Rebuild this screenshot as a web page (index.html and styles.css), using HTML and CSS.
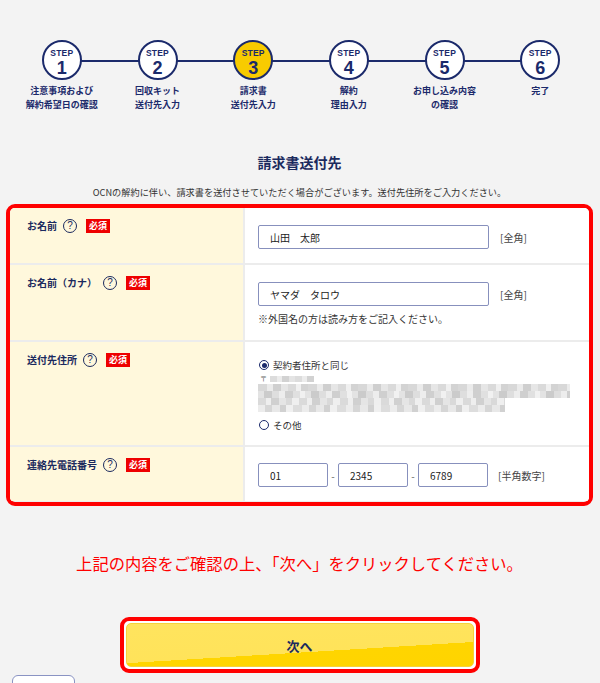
FILE: index.html
```html
<!DOCTYPE html>
<html lang="ja">
<head>
<meta charset="utf-8">
<title>請求書送付先</title>
<link rel="stylesheet" href="styles.css">
</head>
<body>
<div class="page">
  <ol class="steps">
    <li class="step"><span class="circle"><span class="step-word">STEP</span><span class="step-num">1</span></span><span class="step-label">注意事項および<br>解約希望日の確認</span></li>
    <li class="step"><span class="circle"><span class="step-word">STEP</span><span class="step-num">2</span></span><span class="step-label">回収キット<br>送付先入力</span></li>
    <li class="step"><span class="circle current"><span class="step-word">STEP</span><span class="step-num">3</span></span><span class="step-label">請求書<br>送付先入力</span></li>
    <li class="step"><span class="circle"><span class="step-word">STEP</span><span class="step-num">4</span></span><span class="step-label">解約<br>理由入力</span></li>
    <li class="step"><span class="circle"><span class="step-word">STEP</span><span class="step-num">5</span></span><span class="step-label">お申し込み内容<br>の確認</span></li>
    <li class="step"><span class="circle"><span class="step-word">STEP</span><span class="step-num">6</span></span><span class="step-label">完了</span></li>
  </ol>

  <h1 class="title">請求書送付先</h1>
  <p class="lead">OCNの解約に伴い、請求書を送付させていただく場合がございます。送付先住所をご入力ください。</p>

  <div class="form-box">
    <div class="form-table">
      <div class="label-cell">
        <div class="label-line"><span class="label">お名前</span><span class="help">?</span><span class="req">必須</span></div>
      </div>
      <div class="value-cell">
        <div class="field"><input class="text-input" type="text" value="山田　太郎"><span class="hint">[全角]</span></div>
      </div>

      <div class="label-cell">
        <div class="label-line"><span class="label">お名前（カナ）</span><span class="help">?</span><span class="req">必須</span></div>
      </div>
      <div class="value-cell">
        <div class="field"><input class="text-input" type="text" value="ヤマダ　タロウ"><span class="hint">[全角]</span></div>
        <p class="note">※外国名の方は読み方をご記入ください。</p>
      </div>

      <div class="label-cell">
        <div class="label-line"><span class="label">送付先住所</span><span class="help">?</span><span class="req">必須</span></div>
      </div>
      <div class="value-cell">
        <div class="radio-line"><span class="radio checked"></span><span class="radio-text">契約者住所と同じ</span></div>
        <div class="zip"><span class="zip-mark">〒</span><span class="zip-blur"></span></div>
        <div class="mosaic">
          <div class="mz mz1"></div>
          <div class="mz mz2"></div>
          <div class="mz mz3"></div>
          <div class="mz mz4"></div>
        </div>
        <div class="radio-line other"><span class="radio"></span><span class="radio-text">その他</span></div>
      </div>

      <div class="label-cell">
        <div class="label-line"><span class="label">連絡先電話番号</span><span class="help">?</span><span class="req">必須</span></div>
      </div>
      <div class="value-cell phone-cell">
        <div class="field">
          <input class="tel-input" type="text" value="01"><span class="dash">-</span><input class="tel-input" type="text" value="2345"><span class="dash">-</span><input class="tel-input" type="text" value="6789"><span class="hint tel-hint">[半角数字]</span>
        </div>
      </div>
    </div>
  </div>

  <p class="confirm">上記の内容をご確認の上、「次へ」をクリックしてください。</p>

  <div class="next-wrap"><button class="next-btn" type="button">次へ</button></div>
  <button class="back-btn" type="button" aria-label="戻る"></button>
</div>
</body>
</html>
```

FILE: styles.css
```css
* { box-sizing: border-box; }
html, body { margin: 0; padding: 0; }
body {
  background: #f3f3f3;
  font-family: "Noto Sans CJK JP", "Noto Sans", sans-serif;
  color: #333;
  width: 600px;
  height: 683px;
  overflow: hidden;
}
.page { padding: 40px 7px 0 6px; }

/* steps */
.steps {
  list-style: none;
  margin: 0 5px 0 8px;
  padding: 0;
  display: flex;
}
.step {
  flex: 1 1 0;
  position: relative;
  display: flex;
  flex-direction: column;
  align-items: center;
}
.step + .step::before {
  content: "";
  position: absolute;
  top: 20px;
  left: -50%;
  width: 100%;
  height: 2px;
  background: #1b2a6b;
}
.circle {
  position: relative;
  z-index: 1;
  width: 40px;
  height: 40px;
  border: 2px solid #1b2a6b;
  border-radius: 50%;
  background: #fff;
  display: flex;
  flex-direction: column;
  align-items: center;
  justify-content: center;
  padding-top: 5px;
  color: #1b2a6b;
  font-family: "Liberation Sans", Arial, sans-serif;
  font-weight: 700;
}
.circle.current { background: #f8cb00; }
.step-word { display: block; font-size: 8.5px; line-height: 10px; letter-spacing: 0.2px; }
.step-num { display: block; font-size: 18px; line-height: 20px; }
.step-label {
  margin-top: 4px;
  font-size: 9px;
  line-height: 13.5px;
  font-weight: 700;
  color: #1b2a6b;
  text-align: center;
  white-space: nowrap;
}

/* heading */
.title {
  margin: 41px 0 0;
  font-size: 14px;
  line-height: 20px;
  font-weight: 700;
  color: #1b2a5e;
  text-align: center;
}
.lead {
  margin: 13px 0 0;
  font-size: 9.2px;
  line-height: 14px;
  text-align: center;
  color: #333;
}

/* form */
.form-box {
  margin-top: 5px;
  border: 4px solid #f00;
  border-radius: 9px;
  overflow: hidden;
  background: #ececec;
  padding-bottom: 1px;
}
.form-table {
  display: grid;
  grid-template-columns: 233px 1fr;
  gap: 2px;
  background: #ececec;
}
.label-cell {
  background: #fff8dc;
  padding: 11px 10px 11px 17px;
}
.label-line { display: flex; align-items: center; }
.label {
  font-size: 10px;
  line-height: 14px;
  font-weight: 700;
  color: #1b2a5e;
}
.help {
  margin-left: 6px;
  width: 14px;
  height: 14px;
  border: 1.5px solid #1b2a5e;
  border-radius: 50%;
  display: flex;
  align-items: center;
  justify-content: center;
  font-family: "Liberation Sans", sans-serif;
  font-size: 10px;
  line-height: 10px;
  color: #1b2a5e;
}
.req {
  margin-left: 9px;
  width: 24px;
  height: 14px;
  background: #ee0000;
  color: #fff;
  font-size: 9px;
  line-height: 14px;
  font-weight: 700;
  text-align: center;
}
.value-cell {
  background: #fff;
  padding: 17px 13px 14px;
}
.phone-cell { padding-top: 16px; }
.field { display: flex; align-items: center; }
.text-input,
.tel-input {
  height: 24px;
  border: 1px solid #8790bd;
  border-radius: 2px;
  background: #fff;
  padding: 0 11px;
  font-family: "Noto Sans CJK JP", sans-serif;
  font-size: 10px;
  color: #222;
  outline: none;
}
.text-input { width: 231px; }
.tel-input { width: 70px; }
.dash {
  width: 10px;
  text-align: center;
  font-size: 10px;
  color: #666;
}
.hint {
  margin-left: 11px;
  font-size: 10px;
  color: #444;
}
.tel-hint { margin-left: 10px; }
.note {
  margin: 6px 0 0;
  font-size: 10px;
  line-height: 14px;
  color: #333;
}

/* radio + address */
.radio-line {
  display: flex;
  align-items: center;
  height: 12px;
  margin-left: 1px;
}
.radio {
  width: 10px;
  height: 10px;
  border: 1.5px solid #1b2a6b;
  border-radius: 50%;
  background: #fff;
  display: flex;
  align-items: center;
  justify-content: center;
}
.radio.checked::after {
  content: "";
  width: 5px;
  height: 5px;
  border-radius: 50%;
  background: #1b2a6b;
}
.radio-text {
  margin-left: 4px;
  font-size: 9.5px;
  color: #333;
}
.zip {
  display: flex;
  align-items: center;
  height: 9px;
  margin-top: 3px;
  margin-left: 2px;
}
.zip-mark { font-size: 7px; line-height: 7px; color: #666; }
.zip-blur {
  margin-left: 3px;
  width: 44px;
  height: 6px;
  background: repeating-linear-gradient(90deg, #dcdcdc 0 7px, #ececec 7px 12px, #d2d2d2 12px 19px, #e4e4e4 19px 25px);
}
.mosaic { margin-top: 1px; }
.mz { height: 7px; }
.mz1 {
  width: 312px;
  background: repeating-linear-gradient(90deg, #d8d8d8 0 9px, #ebebeb 9px 15px, #cfcfcf 15px 23px, #e6e6e6 23px 30px, #dadada 30px 38px, #f0f0f0 38px 43px, #d3d3d3 43px 50px);
}
.mz2 {
  width: 312px;
  background: repeating-linear-gradient(90deg, #e3e3e3 0 6px, #cbcbcb 6px 14px, #dedede 14px 21px, #ededed 21px 27px, #cfcfcf 27px 35px, #e0e0e0 35px 42px, #f1f1f1 42px 47px);
}
.mz3 {
  width: 247px;
  background: repeating-linear-gradient(90deg, #dadada 0 8px, #eeeeee 8px 13px, #d0d0d0 13px 21px, #e5e5e5 21px 28px, #d9d9d9 28px 34px, #efefef 34px 41px);
}
.mz4 {
  width: 247px;
  background: repeating-linear-gradient(90deg, #ececec 0 7px, #d6d6d6 7px 14px, #e8e8e8 14px 22px, #d1d1d1 22px 28px, #f0f0f0 28px 35px, #dddddd 35px 44px);
}
.radio-line.other { margin-top: 7px; }

/* bottom */
.confirm {
  margin: 47px 0 0;
  text-align: center;
  color: #f00;
  font-size: 16.3px;
  line-height: 20px;
}
.next-wrap {
  width: 360px;
  margin: 44px auto 0;
  border: 4px solid #f00;
  border-radius: 9px;
  padding: 2px;
  background: #fff;
}
.next-btn {
  display: block;
  width: 100%;
  height: 44px;
  border: 1px solid #f6d23a;
  border-radius: 5px;
  background: linear-gradient(176.5deg, #ffe45e 0, #ffe35a 62%, #ffd500 62%, #ffd400 100%);
  font-family: "Noto Sans CJK JP", sans-serif;
  font-size: 13px;
  font-weight: 700;
  color: #1b2a5e;
  padding: 0;
}
.back-btn {
  display: block;
  margin: 2px 0 0 6px;
  width: 63px;
  height: 30px;
  border: 1px solid #8a93c3;
  border-radius: 6px;
  background: #fff;
}
```
